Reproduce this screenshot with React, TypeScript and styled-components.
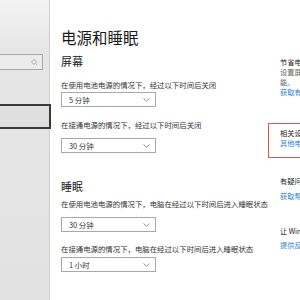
import React from "react";
import styled, { createGlobalStyle } from "styled-components";

const GlobalStyle = createGlobalStyle`
  html, body {
    margin: 0;
    padding: 0;
    background: #ffffff;
  }
  body {
    font-family: "Noto Sans CJK SC", "Noto Sans", sans-serif;
  }
`;

const Window = styled.div`
  width: 300px;
  height: 300px;
  display: flex;
  overflow: hidden;
  background: #ffffff;
`;

const Sidebar = styled.div`
  width: 50px;
  flex-shrink: 0;
  background: linear-gradient(#f3f3f3 0px, #e6e6e6 50px, #e2e2e2 100%);
  border-right: 1px solid #cfcfcf;
  padding-top: 54px;
  box-sizing: border-box;
`;

const SearchBox = styled.div`
  width: 43px;
  height: 16px;
  box-sizing: border-box;
  border: 1px solid #a9a9a9;
  border-left: none;
  background: #ececec;
  display: flex;
  align-items: center;
  justify-content: flex-end;
  padding-right: 4px;
`;

const NavItem = styled.div<{ $active?: boolean }>`
  height: 25px;
  margin-top: 34px;
  box-sizing: border-box;
  border: 2px solid ${(p) => (p.$active ? "#3a3a3a" : "transparent")};
  border-left: none;
  background: #dedede;
  width: 51px;
`;

const Main = styled.div`
  width: 218px;
  flex-shrink: 0;
  padding: 27px 0 0 11px;
  box-sizing: border-box;
  color: #1a1a1a;
`;

const Title = styled.div`
  font-size: 15.5px;
  line-height: 20px;
  white-space: nowrap;
`;

const Heading = styled.div<{ $top: number }>`
  font-size: 11px;
  line-height: 14px;
  margin-top: ${(p) => p.$top}px;
  white-space: nowrap;
`;

const Label = styled.div<{ $top: number }>`
  font-size: 7.4px;
  line-height: 10px;
  color: #333333;
  margin-top: ${(p) => p.$top}px;
  white-space: nowrap;
`;

const Select = styled.div<{ $top: number }>`
  width: 95px;
  height: 15px;
  margin-top: ${(p) => p.$top}px;
  box-sizing: border-box;
  border: 1px solid #a8a8a8;
  display: flex;
  align-items: center;
  justify-content: space-between;
  padding: 0 5px 0 7px;
  font-size: 7.4px;
  color: #333333;
`;

const Aside = styled.div`
  flex: 1;
  padding-top: 57px;
  min-width: 0;
`;

const Block = styled.div<{ $top: number }>`
  margin-top: ${(p) => p.$top}px;
  padding-left: 12px;
  white-space: nowrap;
`;

const RelatedBox = styled.div`
  margin-top: 26px;
  height: 35px;
  box-sizing: border-box;
  border: 1.5px solid #d9534f;
  border-right: none;
  padding: 4px 0 0 11px;
  white-space: nowrap;
`;

const AsideTitle = styled.div`
  font-size: 7.2px;
  line-height: 10px;
  color: #1a1a1a;
`;

const AsideText = styled.div`
  font-size: 7.2px;
  line-height: 10px;
  color: #666666;
`;

const AsideLink = styled.div<{ $top?: number }>`
  font-size: 7.2px;
  line-height: 10px;
  color: #2f7fd0;
  margin-top: ${(p) => p.$top || 0}px;
`;

const Chevron = () => (
  <svg width="7" height="4" viewBox="0 0 7 4">
    <path d="M0.5 0.5 L3.5 3.2 L6.5 0.5" fill="none" stroke="#777" strokeWidth="0.8" />
  </svg>
);

const SearchIcon = () => (
  <svg width="7" height="7" viewBox="0 0 7 7">
    <circle cx="3" cy="3" r="2.2" fill="none" stroke="#aaa" strokeWidth="0.8" />
    <path d="M4.6 4.6 L6.5 6.5" stroke="#aaa" strokeWidth="0.8" />
  </svg>
);

const App = () => {
  return (
    <>
      <GlobalStyle />
      <Window>
        <Sidebar>
          <SearchBox>
            <SearchIcon />
          </SearchBox>
          <NavItem $active />
        </Sidebar>
        <Main>
          <Title>电源和睡眠</Title>
          <Heading $top={7}>屏幕</Heading>
          <Label $top={12}>在使用电池电源的情况下，经过以下时间后关闭</Label>
          <Select $top={2}>
            5 分钟
            <Chevron />
          </Select>
          <Label $top={13}>在接通电源的情况下，经过以下时间后关闭</Label>
          <Select $top={8}>
            30 分钟
            <Chevron />
          </Select>
          <Heading $top={26}>睡眠</Heading>
          <Label $top={6}>在使用电池电源的情况下，电脑在经过以下时间后进入睡眠状态</Label>
          <Select $top={8}>
            30 分钟
            <Chevron />
          </Select>
          <Label $top={12}>在接通电源的情况下，电脑在经过以下时间后进入睡眠状态</Label>
          <Select $top={3}>
            1 小时
            <Chevron />
          </Select>
        </Main>
        <Aside>
          <Block $top={0}>
            <AsideTitle>节省电能和延长电池使用时间</AsideTitle>
            <AsideText>设置屏幕和睡眠时间以节省电</AsideText>
            <AsideText>能。</AsideText>
            <AsideLink>获取有关节能的详细信息</AsideLink>
          </Block>
          <RelatedBox>
            <AsideTitle>相关设置</AsideTitle>
            <AsideLink $top={0}>其他电源设置</AsideLink>
          </RelatedBox>
          <Block $top={18}>
            <AsideTitle>有疑问？</AsideTitle>
            <AsideLink $top={5}>获取帮助</AsideLink>
          </Block>
          <Block $top={25}>
            <AsideTitle>让 Windows 变得更好</AsideTitle>
            <AsideLink $top={4}>提供反馈</AsideLink>
          </Block>
        </Aside>
      </Window>
    </>
  );
};

export default App;
